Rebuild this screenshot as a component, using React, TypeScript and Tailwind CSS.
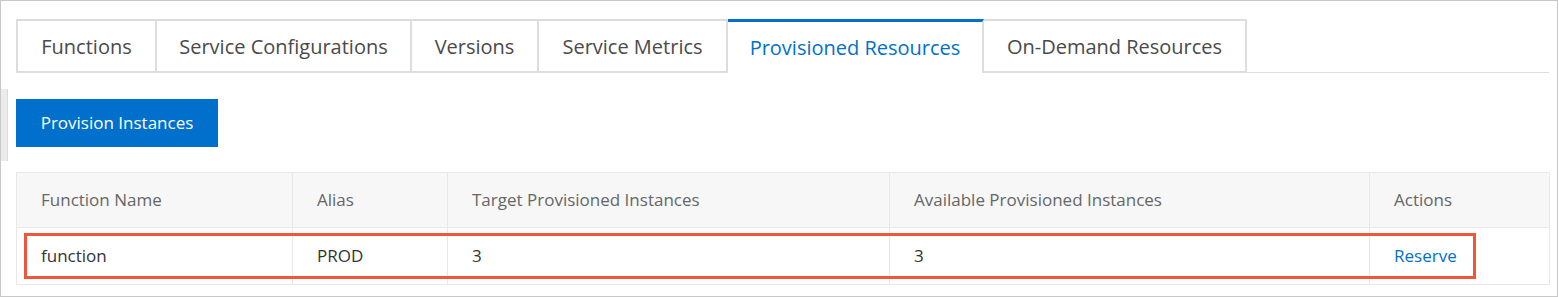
import React from 'react';

const tabs = [
  { label: 'Functions', w: 'w-[141px]' },
  { label: 'Service Configurations', w: 'w-[255px]' },
  { label: 'Versions', w: 'w-[127px]' },
  { label: 'Service Metrics', w: 'w-[189px]' },
  { label: 'Provisioned Resources', w: 'w-[256px]', active: true },
  { label: 'On-Demand Resources', w: 'w-[263px]' },
];

export default function App() {
  return (
    <div className="w-[1559px] h-[297px] bg-white font-['Open_Sans',sans-serif]">
      <div className="relative w-[1558px] h-[297px] border border-[#c8c8c8] pt-[18px] pl-[15px] pr-[8px]">
        {/* collapsed sidebar handle */}
        <div className="absolute left-0 top-[88px] w-[7px] h-[72px] bg-[#ebebeb] border-r border-[#dcdcdc]" />

        {/* tabs */}
        <div className="flex h-[54px]">
          {tabs.map((t, i) =>
            t.active ? (
              <div
                key={t.label}
                className={`${t.w} h-full flex items-center justify-center border-t-[3px] border-t-[#0070cc] border-r-2 border-r-[#dddddd] text-[20px] text-[#0070cc] pt-[1px]`}
              >
                {t.label}
              </div>
            ) : (
              <div
                key={t.label}
                className={`${t.w} h-full flex items-center justify-center border-y-2 border-r-2 border-[#dddddd] ${i === 0 ? 'border-l-2' : ''} text-[20px] text-[#4a4a4a] pt-[2px]`}
              >
                {t.label}
              </div>
            )
          )}
          <div className="flex-1 h-full border-b border-[#dddddd]" />
        </div>

        <button className="mt-[26px] h-[48px] w-[202px] bg-[#0070cc] text-white text-[17px] flex items-center justify-center">
          Provision Instances
        </button>

        {/* table */}
        <div className="relative mt-[25px]">
          <table className="w-[1533px] border-collapse border border-[#e8e8e8] text-[17px] table-fixed">
            <colgroup>
              <col className="w-[276px]" />
              <col className="w-[155px]" />
              <col className="w-[442px]" />
              <col className="w-[480px]" />
              <col className="w-[180px]" />
            </colgroup>
            <thead>
              <tr className="h-[55px] bg-[#f7f7f7] text-[#666666]">
                <th className="font-normal text-left pl-[24px] border border-[#e8e8e8]">Function Name</th>
                <th className="font-normal text-left pl-[24px] border border-[#e8e8e8]">Alias</th>
                <th className="font-normal text-left pl-[24px] border border-[#e8e8e8]">Target Provisioned Instances</th>
                <th className="font-normal text-left pl-[24px] border border-[#e8e8e8]">Available Provisioned Instances</th>
                <th className="font-normal text-left pl-[24px] border border-[#e8e8e8]">Actions</th>
              </tr>
            </thead>
            <tbody>
              <tr className="h-[57px] text-[#333333]">
                <td className="pl-[24px] border border-[#e8e8e8]">function</td>
                <td className="pl-[24px] border border-[#e8e8e8]">PROD</td>
                <td className="pl-[24px] border border-[#e8e8e8]">3</td>
                <td className="pl-[24px] border border-[#e8e8e8]">3</td>
                <td className="pl-[24px] border border-[#e8e8e8]">
                  <a className="text-[#0070cc] cursor-pointer">Reserve</a>
                </td>
              </tr>
            </tbody>
          </table>
          {/* highlight box */}
          <div className="absolute left-[8px] top-[61px] w-[1452px] h-[46px] border-[3px] border-[#f0573a] pointer-events-none" />
        </div>
      </div>
    </div>
  );
}
